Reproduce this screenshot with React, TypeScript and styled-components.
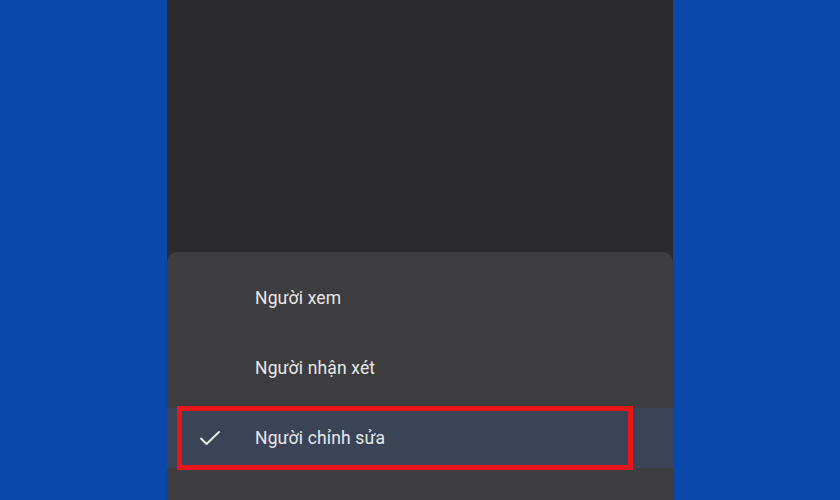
import React from 'react'
import styled, { createGlobalStyle } from 'styled-components'

const GlobalStyle = createGlobalStyle`
  html, body {
    margin: 0;
    padding: 0;
    background: #0a49ab;
  }
  body {
    font-family: Roboto, "Noto Sans", "Liberation Sans", sans-serif;
  }
`

const Stage = styled.div`
  width: 840px;
  height: 500px;
  background: #0a49ab;
  display: flex;
  justify-content: center;
  overflow: hidden;
`

const Phone = styled.div`
  width: 506px;
  height: 500px;
  background: #2a2a2d;
  display: flex;
  flex-direction: column;
  justify-content: flex-end;
`

const Sheet = styled.div`
  height: 248px;
  background: #3d3d3f;
  border-radius: 10px 10px 0 0;
  padding-top: 16px;
  box-sizing: border-box;
  display: flex;
  flex-direction: column;
  gap: 10px;
`

const Row = styled.div<{ $selected?: boolean }>`
  position: relative;
  height: 60px;
  display: flex;
  align-items: center;
  background: ${p => (p.$selected ? '#3a4456' : 'transparent')};
`

const IconSlot = styled.div`
  width: 88px;
  display: flex;
  justify-content: flex-start;
  padding-left: 31px;
  box-sizing: border-box;
  color: #e6e8ec;
`

const Label = styled.span`
  color: #e8e8ea;
  font-size: 17.5px;
  letter-spacing: 0.15px;
`

const Highlight = styled.div`
  position: absolute;
  left: 10px;
  top: -2px;
  width: 456px;
  height: 64px;
  border: 5px solid #e8151b;
  box-sizing: border-box;
  pointer-events: none;
`

const Check = () => (
  <svg width="24" height="24" viewBox="0 0 24 24" fill="none">
    <path d="M3 12.5l5.5 5.5L21 6" stroke="currentColor" strokeWidth="2" strokeLinecap="round" strokeLinejoin="round" />
  </svg>
)

const roles = [
  { name: 'Người xem', selected: false },
  { name: 'Người nhận xét', selected: false },
  { name: 'Người chỉnh sửa', selected: true },
]

export default function App() {
  return (
    <>
      <GlobalStyle />
      <Stage>
        <Phone>
          <Sheet>
            {roles.map(r => (
              <Row key={r.name} $selected={r.selected}>
                <IconSlot>{r.selected ? <Check /> : null}</IconSlot>
                <Label>{r.name}</Label>
                {r.selected ? <Highlight /> : null}
              </Row>
            ))}
          </Sheet>
        </Phone>
      </Stage>
    </>
  )
}
